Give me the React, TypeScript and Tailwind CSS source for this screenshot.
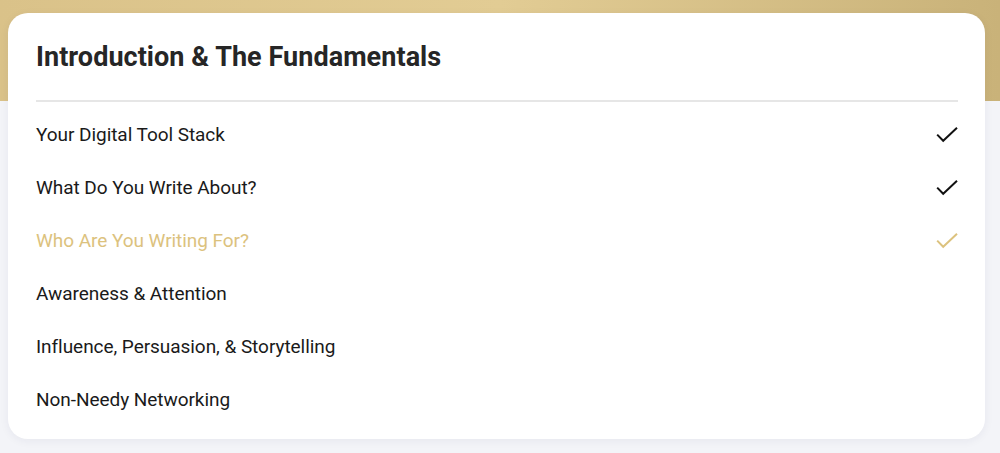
import React from "react";

const items = [
  { label: "Your Digital Tool Stack", state: "done" },
  { label: "What Do You Write About?", state: "done" },
  { label: "Who Are You Writing For?", state: "active" },
  { label: "Awareness & Attention", state: "none" },
  { label: "Influence, Persuasion, & Storytelling", state: "none" },
  { label: "Non-Needy Networking", state: "none" },
];

function Check({ color }: { color: string }) {
  return (
    <svg width="22" height="16" viewBox="0 0 22 16" fill="none">
      <path d="M1.2 7.6 L7.2 13.8 L21 0.8" stroke={color} strokeWidth="2" strokeLinecap="butt" strokeLinejoin="miter" />
    </svg>
  );
}

export default function App() {
  return (
    <div
      className="w-[1000px] h-[453px] relative overflow-hidden bg-[#f3f4f8]"
      style={{ fontFamily: "Roboto, 'Liberation Sans', sans-serif" }}
    >
      <div className="absolute left-0 top-0 w-full h-[101px] bg-gradient-to-r from-[#dac289] via-[#e2cc94] to-[#c9b279]" />
      <div className="relative pt-[13px] pl-[8px] pr-[15px]">
        <div className="w-[977px] h-[426px] bg-white rounded-[20px] shadow-[0_2px_10px_rgba(30,40,80,0.06)] pl-[28px] pr-[27px]">
          <div className="h-[87px] flex items-center border-b-2 border-[#e6e6e6] box-content">
            <h1 className="text-[27px] leading-[32px] font-bold text-[#262626] tracking-[0.05px]">
              Introduction &amp; The Fundamentals
            </h1>
          </div>
          <div className="pt-[6px]">
            {items.map((it) => (
              <div key={it.label} className="h-[53px] flex items-center justify-between">
                <span
                  className={
                    "text-[19px] leading-[24px] tracking-[-0.05px] " +
                    (it.state === "active" ? "text-[#dcc27e]" : "text-[#1a1a1a]")
                  }
                >
                  {it.label}
                </span>
                {it.state === "done" && <Check color="#111111" />}
                {it.state === "active" && <Check color="#dcc27e" />}
              </div>
            ))}
          </div>
        </div>
      </div>
    </div>
  );
}
